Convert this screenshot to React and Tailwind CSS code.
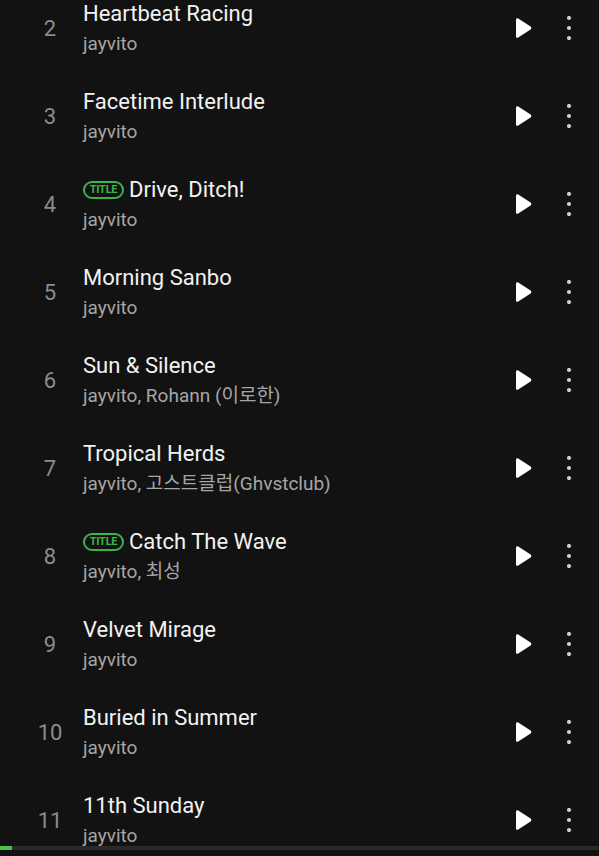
import React from 'react';

const tracks = [
    { n: 2, title: 'Heartbeat Racing', artist: 'jayvito' },
    { n: 3, title: 'Facetime Interlude', artist: 'jayvito' },
    { n: 4, title: 'Drive, Ditch!', artist: 'jayvito', isTitle: true },
    { n: 5, title: 'Morning Sanbo', artist: 'jayvito' },
    { n: 6, title: 'Sun & Silence', artist: 'jayvito, Rohann (이로한)' },
    { n: 7, title: 'Tropical Herds', artist: 'jayvito, 고스트클럽(Ghvstclub)' },
    { n: 8, title: 'Catch The Wave', artist: 'jayvito, 최성', isTitle: true },
    { n: 9, title: 'Velvet Mirage', artist: 'jayvito' },
    { n: 10, title: 'Buried in Summer', artist: 'jayvito' },
    { n: 11, title: '11th Sunday', artist: 'jayvito' },
];

const PlayIcon = () => (
    <svg width="20" height="22" viewBox="0 0 20 22">
        <path d="M3 2.6 C3 1.4 4.2 0.8 5.2 1.4 L17.6 9.6 C18.5 10.2 18.5 11.8 17.6 12.4 L5.2 20.6 C4.2 21.2 3 20.6 3 19.4 Z" fill="#ffffff" />
    </svg>
);

const MoreIcon = () => (
    <svg width="6" height="24" viewBox="0 0 6 24">
        <circle cx="3" cy="2" r="2.1" fill="#cfcfcf" />
        <circle cx="3" cy="12" r="2.1" fill="#cfcfcf" />
        <circle cx="3" cy="22" r="2.1" fill="#cfcfcf" />
    </svg>
);

const TitleBadge = () => (
    <span className="mr-[5px] inline-flex h-[18px] w-[41px] items-center justify-center rounded-full border-2 border-[#3cb44a] text-[11px] font-bold leading-none tracking-tight text-[#3cb44a]">
        TITLE
    </span>
);

const TrackRow = ({ track }) => (
    <div className="flex h-[88px] shrink-0 items-center">
        <div className="w-[83px] pl-[17px] text-center text-[22px] text-[#8c8c8c]">{track.n}</div>
        <div className="flex min-w-0 flex-1 flex-col gap-[5px]">
            <div className="flex items-center text-[22px] leading-[26px] text-[#f2f2f2]">
                {track.isTitle && <TitleBadge />}
                <span>{track.title}</span>
            </div>
            <div className="text-[19px] leading-[24px] text-[#a6a6a6]">{track.artist}</div>
        </div>
        <div className="flex w-[32px] justify-center">
            <PlayIcon />
        </div>
        <div className="flex w-[60px] justify-center">
            <MoreIcon />
        </div>
    </div>
);

export default function App() {
    return (
        <div
            className="flex h-[856px] w-[599px] flex-col overflow-hidden bg-[#121212]"
            style={{ fontFamily: 'Roboto, "Noto Sans CJK KR", sans-serif' }}
        >
            <div className="-mt-[16px] flex flex-1 flex-col overflow-hidden">
                {tracks.map((t) => (
                    <TrackRow key={t.n} track={t} />
                ))}
            </div>
            <div className="flex h-[4px] bg-[#2a2a2a]">
                <div className="w-[12px] bg-[#4cc24a]" />
            </div>
            <div className="h-[6px] bg-[#121212]" />
        </div>
    );
}
